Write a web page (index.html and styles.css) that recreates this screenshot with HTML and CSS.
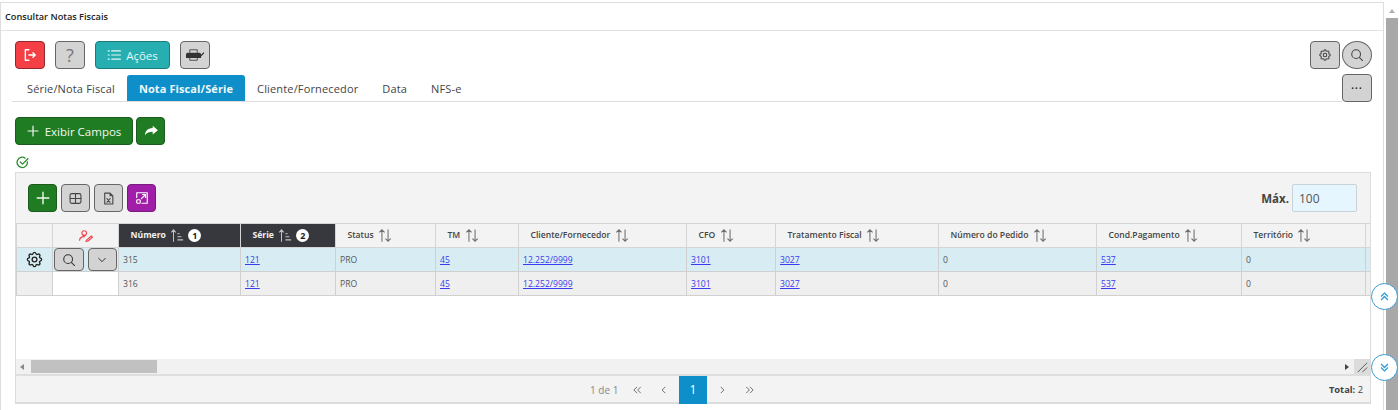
FILE: index.html
```html
<!DOCTYPE html>
<html lang="pt">
<head>
<meta charset="utf-8">
<title>Consultar Notas Fiscais</title>
<link rel="stylesheet" href="styles.css">
</head>
<body>
<svg class="defs" width="0" height="0" aria-hidden="true">
  <symbol id="gear" viewBox="0 0 24 24"><path d="M10.325 4.317c.426-1.756 2.924-1.756 3.35 0a1.724 1.724 0 0 0 2.573 1.066c1.543-.94 3.31.826 2.37 2.37a1.724 1.724 0 0 0 1.065 2.572c1.756.426 1.756 2.924 0 3.35a1.724 1.724 0 0 0-1.066 2.573c.94 1.543-.826 3.31-2.37 2.37a1.724 1.724 0 0 0-2.572 1.065c-.426 1.756-2.924 1.756-3.35 0a1.724 1.724 0 0 0-2.573-1.066c-1.543.94-3.31-.826-2.37-2.37a1.724 1.724 0 0 0-1.065-2.572c-1.756-.426-1.756-2.924 0-3.35a1.724 1.724 0 0 0 1.066-2.573c-.94-1.543.826-3.31 2.37-2.37c1 .608 2.296.07 2.572-1.065z"/><circle cx="12" cy="12" r="3"/></symbol>
  <symbol id="search" viewBox="0 0 24 24"><circle cx="10.5" cy="10.5" r="7.5"/><path d="M16 16l5.5 5.5"/></symbol>
  <symbol id="sort" viewBox="0 0 16 16"><path d="M4.500 15V1.500M1.500 4.500l3-3 3 3M11.500 1v13.500M8.500 11.500l3 3 3-3"/></symbol>
  <symbol id="sorted" viewBox="0 0 16 16"><path d="M4 15V1.500M1.500 4.500L4 1.500l2.500 3M8.500 6h2.500M8.500 9.500h4.500M8.500 13h6.500"/></symbol>
</svg>
<div class="page">
  <main class="panel">
    <header class="title">Consultar Notas Fiscais</header>
    <div class="body">
      <div class="actions">
        <div class="group">
          <button class="btn square red" aria-label="Sair"><svg class="ico w14 thick" viewBox="0 0 24 24"><path d="M10 3H4v18h6M10 12h11M17 8l4 4-4 4"/></svg></button>
          <button class="btn square gray help" aria-label="Ajuda">?</button>
          <button class="btn teal"><svg class="ico w14" viewBox="0 0 24 24"><path d="M8 5h15M8 12h15M8 19h15M2 5h2M2 12h2M2 19h2"/></svg>Ações</button>
          <button class="btn square gray" aria-label="Imprimir"><svg class="print" viewBox="0 0 24 16"><path class="top" d="M5 5V1h10v4"/><path d="M2 5h16a2 2 0 0 1 2 2v5H0V7a2 2 0 0 1 2-2z"/><path class="top" d="M5 12v3h10v-3"/><path class="pen" d="M19 10l5-5"/></svg></button>
        </div>
        <div class="group tight">
          <button class="btn square gray" aria-label="Configurar"><svg class="ico w14 fine" viewBox="0 0 24 24"><use href="#gear"/></svg></button>
          <button class="btn square gray round" aria-label="Pesquisar"><svg class="ico w14 fine" viewBox="0 0 24 24"><use href="#search"/></svg></button>
        </div>
      </div>
      <div class="tabrow">
        <nav class="tabs">
          <a class="tab">Série/Nota Fiscal</a>
          <a class="tab active">Nota Fiscal/Série</a>
          <a class="tab">Cliente/Fornecedor</a>
          <a class="tab">Data</a>
          <a class="tab">NFS-e</a>
        </nav>
        <button class="btn square gray more" aria-label="Mais">•••</button>
      </div>
      <div class="fields">
        <button class="btn green wide"><svg class="ico w12 thick" viewBox="0 0 24 24"><path d="M12 2v20M2 12h20"/></svg>Exibir Campos</button>
        <button class="btn square green" aria-label="Avançar"><svg class="fill" viewBox="0 0 16 14"><path d="M10 1l6 5-6 5V8C6 8 3 9 1 12c0-5 3-8 9-8.500z"/></svg></button>
      </div>
      <svg class="check" viewBox="0 0 24 24"><path d="M21 11a9.500 9.500 0 1 1-4-7M8 11l4 4 10-10"/></svg>
      <section class="grid">
        <div class="gridbar">
          <div class="group small">
            <button class="btn sq green" aria-label="Novo"><svg class="ico w14 thick" viewBox="0 0 24 24"><path d="M12 2v20M2 12h20"/></svg></button>
            <button class="btn sq gray" aria-label="Colunas"><svg class="ico w13" viewBox="0 0 24 24"><rect x="2" y="3" width="20" height="18" rx="3"/><path d="M12 3v18M2 12h20"/></svg></button>
            <button class="btn sq gray" aria-label="Excel"><svg class="ico w13" viewBox="0 0 24 24"><path d="M5 2h10l5 5v15H5zM15 2v5h5M9 12l6 7M15 12l-6 7"/></svg></button>
            <button class="btn sq purple" aria-label="Expandir"><svg class="ico w14" viewBox="0 0 24 24"><path d="M3 11V3h18v18h-9M11 13l7-7M13 6h5v5"/><rect x="3" y="15" width="6" height="6" rx="1.500"/></svg></button>
          </div>
          <label class="max">Máx.<input class="maxinput" value="100"></label>
        </div>
        <div class="tablewrap">
          <table>
            <colgroup><col class="c1"><col class="c2"><col class="c3"><col class="c4"><col class="c5"><col class="c6"><col class="c7"><col class="c8"><col class="c9"><col class="c10"><col class="c11"><col class="c12"><col class="c13"></colgroup>
            <thead>
              <tr>
                <th></th>
                <th class="center"><svg class="sign" viewBox="0 0 24 20"><circle cx="9" cy="5" r="4"/><path d="M1 18c0-5 3-7 8-7h1M13 17l8-7 2 2-8 7h-3z"/></svg></th>
                <th class="dark">Número <svg class="sorticon" viewBox="0 0 16 16"><use href="#sorted"/></svg> <span class="badge">1</span></th>
                <th class="dark">Série <svg class="sorticon" viewBox="0 0 16 16"><use href="#sorted"/></svg> <span class="badge">2</span></th>
                <th>Status <svg class="sorticon" viewBox="0 0 16 16"><use href="#sort"/></svg></th>
                <th>TM <svg class="sorticon" viewBox="0 0 16 16"><use href="#sort"/></svg></th>
                <th>Cliente/Fornecedor <svg class="sorticon" viewBox="0 0 16 16"><use href="#sort"/></svg></th>
                <th>CFO <svg class="sorticon" viewBox="0 0 16 16"><use href="#sort"/></svg></th>
                <th>Tratamento Fiscal <svg class="sorticon" viewBox="0 0 16 16"><use href="#sort"/></svg></th>
                <th>Número do Pedido <svg class="sorticon" viewBox="0 0 16 16"><use href="#sort"/></svg></th>
                <th>Cond.Pagamento <svg class="sorticon" viewBox="0 0 16 16"><use href="#sort"/></svg></th>
                <th>Território <svg class="sorticon" viewBox="0 0 16 16"><use href="#sort"/></svg></th>
                <th></th>
              </tr>
            </thead>
            <tbody>
              <tr class="selected">
                <td class="center"><svg class="rowgear" viewBox="0 0 24 24"><use href="#gear"/></svg></td>
                <td class="rowbtns"><div class="btnpair"><button class="btn cell gray" aria-label="Ver"><svg class="ico w14 fine" viewBox="0 0 24 24"><use href="#search"/></svg></button><button class="btn cell gray" aria-label="Opções"><svg class="ico w10 thick" viewBox="0 0 24 24"><path d="M4 8l8 8 8-8"/></svg></button></div></td>
                <td>315</td><td><a href="#">121</a></td><td>PRO</td><td><a href="#">45</a></td><td><a href="#">12.252/9999</a></td><td><a href="#">3101</a></td><td><a href="#">3027</a></td><td>0</td><td><a href="#">537</a></td><td>0</td><td><a class="pink" href="#">0</a></td>
              </tr>
              <tr>
                <td></td>
                <td class="blank"></td>
                <td>316</td><td><a href="#">121</a></td><td>PRO</td><td><a href="#">45</a></td><td><a href="#">12.252/9999</a></td><td><a href="#">3101</a></td><td><a href="#">3027</a></td><td>0</td><td><a href="#">537</a></td><td>0</td><td><a class="pink" href="#">0</a></td>
              </tr>
            </tbody>
          </table>
        </div>
        <div class="hscroll">
          <span class="arrow left"></span>
          <span class="thumb"></span>
          <span class="arrow right"></span>
          <span class="resizer"><svg viewBox="0 0 16 16" class="grip"><path d="M4 14L14 4M9 14l5-5"/></svg></span>
        </div>
        <footer class="pager">
          <div class="pages">
            <span class="count">1 de 1</span>
            <svg class="pg" viewBox="0 0 16 16"><path d="M8 3L3 8l5 5M14 3L9 8l5 5"/></svg>
            <svg class="pg" viewBox="0 0 16 16"><path d="M10 3L5 8l5 5"/></svg>
            <span class="current">1</span>
            <svg class="pg" viewBox="0 0 16 16"><path d="M6 3l5 5-5 5"/></svg>
            <svg class="pg" viewBox="0 0 16 16"><path d="M2 3l5 5-5 5M8 3l5 5-5 5"/></svg>
          </div>
          <div class="total"><b>Total:</b> 2</div>
        </footer>
      </section>
    </div>
    <button class="float up" aria-label="Topo"><svg viewBox="0 0 16 16"><path d="M3 8l5-5 5 5M3 13l5-5 5 5"/></svg></button>
    <button class="float down" aria-label="Fim"><svg viewBox="0 0 16 16"><path d="M3 3l5 5 5-5M3 8l5 5 5-5"/></svg></button>
  </main>
  <aside class="vscroll"><span class="vup"></span><span class="vthumb"></span></aside>
</div>
</body>
</html>
```
FILE: styles.css
```css
* { box-sizing: border-box; }
html, body { margin: 0; height: 410px; overflow: hidden; background: #fff; }
body { font-family: "Open Sans", "Noto Sans", sans-serif; color: #444; }
.defs { position: absolute; }
.page { display: flex; height: 410px; padding-top: 2px; }
.panel { position: relative; width: 1384px; height: 408px; border: 1px solid #dedede; border-bottom: 0; }
.title { height: 28px; padding-left: 4px; display: flex; align-items: center; font-size: 9.200px; font-weight: 600; color: #222; border-bottom: 1px solid #e2e2e2; }
.body { padding: 10px 11px 0 14px; }

.actions { display: flex; justify-content: space-between; }
.group { display: flex; gap: 10px; }
.group.tight { gap: 2px; }
.group.small { gap: 4px; }

.btn { display: inline-flex; align-items: center; justify-content: center; gap: 5px; height: 28px; padding: 0; border: 1px solid #555; border-radius: 4px; font: 11.500px "Open Sans", sans-serif; cursor: pointer; }
.square { width: 30px; }
.red { background: #f44045; color: #fff; border-color: #8f2a2d; }
.gray { background: #d3d3d3; color: #444; border-color: #666; }
.teal { width: 75px; background: #27aeb1; color: #e6f7f7; border-color: #1b7c7e; }
.green { background: #207c22; color: #f2f8f2; border-color: #1a5a1c; }
.purple { background: #a01ea8; color: #fff; border-color: #7b1881; }
.round { border-radius: 50%; }
.help { font-size: 18px; color: #777; }

.ico { fill: none; stroke: currentColor; stroke-width: 2; stroke-linecap: round; stroke-linejoin: round; }
.w14 { width: 14px; height: 14px; }
.w13 { width: 13px; height: 13px; }
.w12 { width: 12px; height: 12px; }
.w10 { width: 10px; height: 10px; }
.thick { stroke-width: 2.400; }
.fine { stroke-width: 1.800; }
.print { width: 18px; height: 12px; fill: #333; stroke: none; }
.print .top { fill: none; stroke: #444; stroke-width: 1.200; }
.print .pen { fill: none; stroke: #333; stroke-width: 1.600; }
.fill { width: 14px; height: 12px; fill: #fff; }

.tabrow { display: flex; align-items: flex-end; justify-content: space-between; margin-top: 5px; margin-left: -3px; }
.tabs { flex: 1; display: flex; height: 27px; padding-left: 3px; border-bottom: 1px solid #ddd; }
.tab { display: flex; align-items: center; padding: 0 12px; font-size: 11px; letter-spacing: .15px; color: #444; }
.tab.active { background: #0f8fc9; color: #eef8fc; font-weight: 700; letter-spacing: .1px; border-radius: 3px 3px 0 0; }
.more { font-size: 7px; letter-spacing: 1.200px; color: #222; }

.fields { display: flex; gap: 3px; margin-top: 15px; }
.wide { width: 118px; gap: 6px; }
.fields .square { width: 29px; }
.check { display: block; width: 13px; height: 13px; margin: 11px 0 0 1px; fill: none; stroke: #2c8a2e; stroke-width: 2.400; stroke-linecap: round; stroke-linejoin: round; }

.grid { width: 1356px; height: 232px; margin-top: 3px; border: 1px solid #dcdcdc; border-bottom-width: 2px; display: flex; flex-direction: column; background: #fff; }
.gridbar { height: 50px; flex: none; padding: 0 13px 0 12px; display: flex; align-items: center; justify-content: space-between; background: #f3f3f3; }
.sq { width: 29px; height: 28px; }
.max { display: flex; align-items: center; gap: 3px; font-size: 11.500px; font-weight: 700; color: #444; }
.maxinput { width: 65px; height: 28px; padding: 0 6px; border: 1px solid #c9d2d6; border-radius: 2px; background: #e6f6fe; font: 12px "Open Sans", sans-serif; color: #555; }

.tablewrap { flex: 1; overflow: hidden; }
table { width: 1369px; table-layout: fixed; border-collapse: collapse; }
.c1 { width: 36px; } .c2 { width: 66px; } .c3 { width: 122px; } .c4 { width: 95px; }
.c5 { width: 100px; } .c6 { width: 83px; } .c7 { width: 168px; } .c8 { width: 89px; }
.c9 { width: 163px; } .c10 { width: 158px; } .c11 { width: 145px; } .c12 { width: 124px; } .c13 { width: 20px; }
th { height: 24px; padding: 0 0 0 11.500px; text-align: left; white-space: nowrap; background: #f3f3f3; border: 1px solid #d5d5d5; font-size: 8.600px; font-weight: 600; color: #444; }
td { height: 24px; padding: 0 4px; font-size: 8.600px; color: #555; background: #efefef; border: 1px solid #d0d0d0; border-width: 1.500px 1px; white-space: nowrap; overflow: hidden; }
tr.selected td { background: #d8edf3; }
th.center, td.center { text-align: center; padding: 0; }
th.dark { background: #37383e; color: #f2f2f2; font-weight: 700; }
td.blank { background: #fff; }
td.rowbtns { padding: 0; background: #d8edf3; }
.btnpair { display: flex; gap: 4px; padding: 0 1px; }
.cell { flex: 1; height: 23px; color: #333; }
a { color: #3a3aee; }
a.pink { color: #a04b9c; }
.sign { display: inline-block; width: 14px; height: 12px; vertical-align: middle; fill: none; stroke: #ef4248; stroke-width: 1.900; }
.sorticon { display: inline-block; width: 14px; height: 15px; margin-left: 2px; vertical-align: middle; fill: none; stroke: currentColor; stroke-width: 1.200; opacity: .75; }
.badge { display: inline-flex; align-items: center; justify-content: center; width: 13px; height: 13px; margin-left: 2px; border-radius: 50%; background: #fff; color: #222; font-size: 9px; vertical-align: middle; }
.rowgear { display: block; width: 19px; height: 19px; margin: auto; fill: none; stroke: #222; stroke-width: 1.700; }

.hscroll { height: 15px; flex: none; display: flex; align-items: center; background: #f1f1f1; padding-left: 4px; position: relative; }
.arrow { width: 0; height: 0; border: 3.500px solid transparent; }
.arrow.left { border-right: 4px solid #888; border-left-width: 0; margin-right: 7px; }
.arrow.right { margin-left: 1188px; border-left: 4px solid #444; border-right-width: 0; }
.thumb { width: 126px; height: 13px; background: #c1c1c1; }
.resizer { margin-left: auto; width: 16px; height: 15px; background: #dcdcdc; }
.grip { display: block; width: 15px; height: 15px; fill: none; stroke: #555; stroke-width: 1; }

.pager { height: 28px; flex: none; display: flex; align-items: center; background: #f3f3f3; border-top: 2px solid #dedede; padding: 0 7px 0 574px; font-size: 10px; color: #888; }
.pages { display: flex; align-items: center; height: 28px; margin-top: 1px; }
.count { width: 42px; }
.pg { width: 10px; height: 10px; margin: 0 9px 0 0; fill: none; stroke: #666; stroke-width: 1.500; }
.pg:nth-of-type(1) { margin-right: 17px; }
.pg:nth-of-type(2) { margin-right: 10px; }
.pg:nth-of-type(3) { margin-left: 10px; margin-right: 18px; }
.current { display: flex; align-items: center; justify-content: center; width: 28px; height: 28px; background: #0f8fc9; color: #fff; font-size: 12px; }
.total { margin-left: auto; font-size: 9.300px; color: #444; }

.float { position: absolute; left: 1370px; width: 27px; height: 27px; padding: 0; display: flex; align-items: center; justify-content: center; border: 1px solid #3a9bd0; border-radius: 50%; background: #fff; }
.float svg { width: 11px; height: 11px; fill: none; stroke: #2f97d2; stroke-width: 1.800; }
.float.up { top: 280px; }
.float.down { top: 351px; }

.vscroll { flex: 1; display: flex; flex-direction: column; align-items: center; background: #fff; padding: 0 1px; margin-top: 1px; }
.vup { width: 0; height: 0; margin: 6px 0 5px; border: 3px solid transparent; border-bottom: 4px solid #b0b0b0; border-top-width: 0; }
.vthumb { flex: 1; width: 12px; background: #a8a8a8; }
```
